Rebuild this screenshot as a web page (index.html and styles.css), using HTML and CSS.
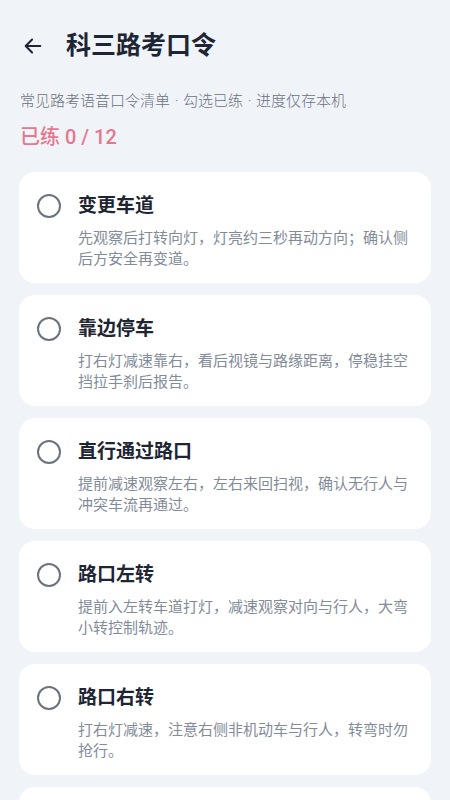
FILE: index.html
```html
<!DOCTYPE html>
<html lang="zh-CN">
<head>
    <meta charset="UTF-8">
    <meta name="viewport" content="width=device-width, initial-scale=1.0">
    <title>科三路考口令</title>
    <link rel="stylesheet" href="styles.css">
</head>
<body>
    <div class="page">
        <header class="header">
            <button class="back" aria-label="返回">
                <svg width="22" height="22" viewBox="0 0 24 24" fill="none" stroke="currentColor" stroke-width="2.2" stroke-linecap="round" stroke-linejoin="round">
                    <path d="M20 12H4.5"/>
                    <path d="M11 5l-7 7 7 7"/>
                </svg>
            </button>
            <h1>科三路考口令</h1>
        </header>

        <p class="intro">常见路考语音口令清单 · 勾选已练 · 进度仅存本机</p>
        <p class="progress">已练 <span id="doneCount">0</span> / <span id="totalCount">12</span></p>

        <ul class="list" id="commandList"></ul>
    </div>

    <script>
        // 口令数据
        const COMMANDS = [
            { title: '变更车道', desc: '先观察后打转向灯，灯亮约三秒再动方向；确认侧后方安全再变道。' },
            { title: '靠边停车', desc: '打右灯减速靠右，看后视镜与路缘距离，停稳挂空挡拉手刹后报告。' },
            { title: '直行通过路口', desc: '提前减速观察左右，左右来回扫视，确认无行人与冲突车流再通过。' },
            { title: '路口左转', desc: '提前入左转车道打灯，减速观察对向与行人，大弯小转控制轨迹。' },
            { title: '路口右转', desc: '打右灯减速，注意右侧非机动车与行人，转弯时勿抢行。' },
            { title: '通过人行横道', desc: '提前减速至可随时停车，左右观察，有行人必须停车让行。' },
            { title: '通过学校区域', desc: '减速慢行，时速不超过三十公里，注意观察儿童动态。' },
            { title: '通过公共汽车站', desc: '减速观察，注意车辆前方突然出现的行人，必要时鸣喇叭。' },
            { title: '会车', desc: '减速靠右行驶，与对向车辆保持安全横向间距。' },
            { title: '超车', desc: '观察前后左右，打左灯从左侧超越，保持安全距离后打右灯驶回。' },
            { title: '掉头', desc: '打左灯减速，观察前后交通，确认安全后一次完成掉头。' },
            { title: '夜间行驶', desc: '按口令正确使用近光、远光，交替变换灯光示意。' }
        ];

        let done = JSON.parse(localStorage.getItem('doneCommands') || '[]');

        function render() {
            const list = document.getElementById('commandList');
            list.innerHTML = '';
            COMMANDS.forEach((cmd, i) => {
                const checked = done.includes(i);
                list.innerHTML += `
                    <li class="card${checked ? ' checked' : ''}" onclick="toggle(${i})">
                        <span class="check"></span>
                        <div class="card-body">
                            <h2>${cmd.title}</h2>
                            <p>${cmd.desc}</p>
                        </div>
                    </li>
                `;
            });
            document.getElementById('doneCount').textContent = done.length;
            document.getElementById('totalCount').textContent = COMMANDS.length;
        }

        function toggle(i) {
            if (done.includes(i)) {
                done = done.filter(x => x !== i);
            } else {
                done.push(i);
            }
            localStorage.setItem('doneCommands', JSON.stringify(done));
            render();
        }

        render();
    </script>
</body>
</html>
```

FILE: styles.css
```css
:root {
    --background: #f0f4f9;
    --card-bg: #ffffff;
    --text: #1e2533;
    --muted: #6b7280;
    --desc: #828b99;
    --accent: #e5788f;
    --ring: #6b7280;
}

* {
    margin: 0;
    padding: 0;
    box-sizing: border-box;
}

body {
    font-family: Roboto, "Noto Sans CJK SC", "Noto Sans CJK JP", "Noto Sans CJK TC", sans-serif;
    background: var(--background);
    color: var(--text);
}

.page {
    padding: 27px 19px 24px;
}

.header {
    display: flex;
    align-items: center;
    height: 38px;
    margin-bottom: 26px;
}

.back {
    display: flex;
    align-items: center;
    justify-content: center;
    width: 26px;
    height: 26px;
    margin-left: 1px;
    margin-right: 20px;
    background: none;
    border: none;
    color: var(--text);
    cursor: pointer;
}

.header h1 {
    font-size: 25px;
    font-weight: 700;
    line-height: 38px;
}

.intro {
    font-size: 15px;
    line-height: 20px;
    font-weight: 300;
    color: var(--muted);
    margin-left: 1px;
    word-spacing: 1px;
}

.progress {
    margin-top: 13px;
    margin-left: 1px;
    font-size: 20px;
    line-height: 26px;
    font-weight: 500;
    color: var(--accent);
}

.list {
    list-style: none;
    display: flex;
    flex-direction: column;
    gap: 12px;
    margin-top: 22px;
}

.card {
    display: flex;
    align-items: flex-start;
    gap: 17px;
    background: var(--card-bg);
    border-radius: 16px;
    padding: 19px 18px 13px;
    cursor: pointer;
}

.check {
    flex: none;
    width: 24px;
    height: 24px;
    margin-top: 3px;
    border: 2.5px solid var(--ring);
    border-radius: 50%;
}

.card.checked .check {
    background: var(--accent);
    border-color: var(--accent);
}

.card-body h2 {
    font-size: 19px;
    font-weight: 700;
    line-height: 30px;
}

.card-body p {
    margin-top: 7px;
    font-size: 15px;
    line-height: 21px;
    color: var(--desc);
}
```
